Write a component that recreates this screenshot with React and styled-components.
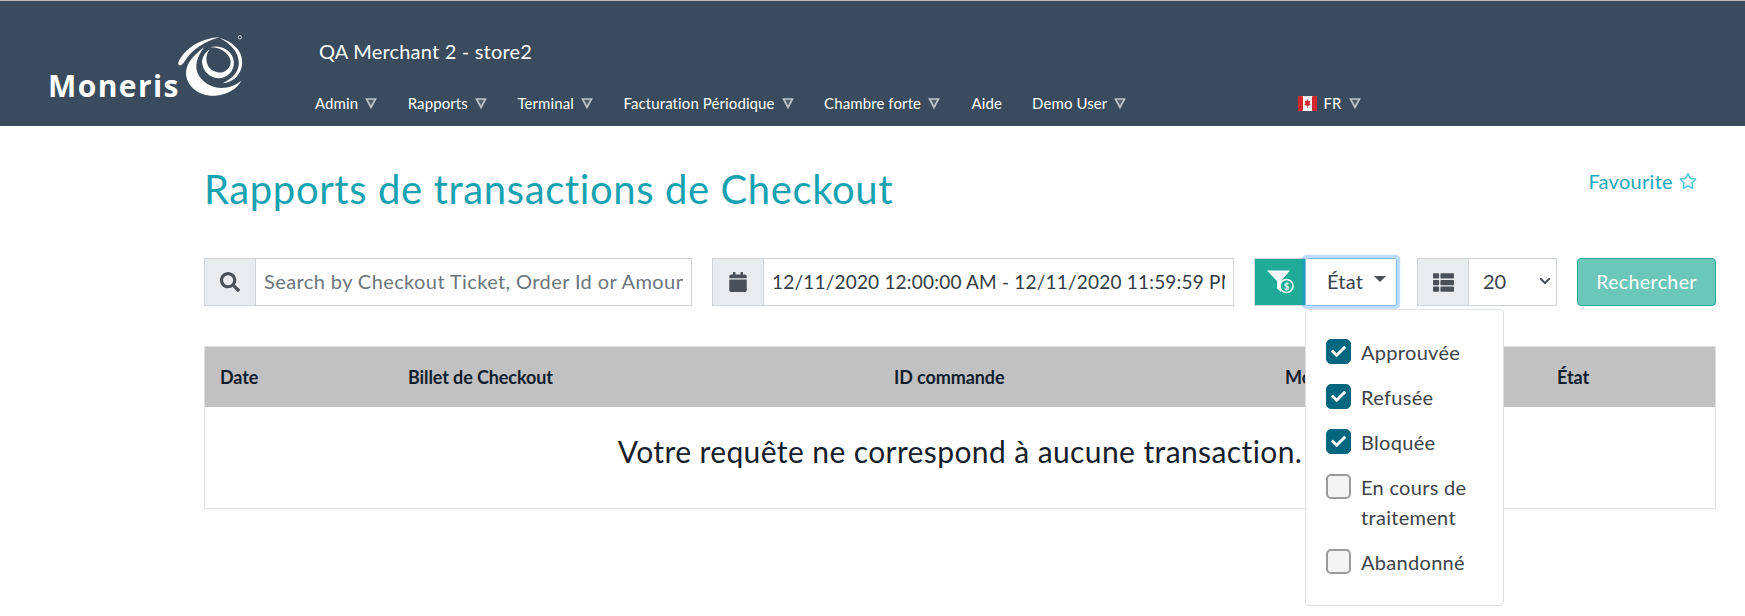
import React from "react";
import styled, { createGlobalStyle } from "styled-components";
import { FaSearch, FaCalendar, FaThList, FaRegStar, FaCheck, FaChevronDown } from "react-icons/fa";

const NAV_ITEMS = [
  { label: "Admin", arrow: true, gap: 30.5 },
  { label: "Rapports", arrow: true, gap: 30.5 },
  { label: "Terminal", arrow: true, gap: 30.5 },
  { label: "Facturation Périodique", arrow: true, gap: 30.5 },
  { label: "Chambre forte", arrow: true, gap: 31.5 },
  { label: "Aide", arrow: false, gap: 30 },
  { label: "Demo User", arrow: true, gap: 172 },
];

const STATUSES = [
  { label: "Approuvée", checked: true },
  { label: "Refusée", checked: true },
  { label: "Bloquée", checked: true },
  { label: "En cours de traitement", checked: false },
  { label: "Abandonné", checked: false },
];

const COLUMNS = [
  { label: "Date", width: 188 },
  { label: "Billet de Checkout", width: 486 },
  { label: "ID commande", width: 391 },
  { label: "Montant", width: 272 },
  { label: "État", width: 173 },
];

const Arrow = () => (
  <NavArrow viewBox="0 0 12 12">
    <path d="M1.5 2 H10.5 L6 10.5 Z" fill="rgba(255,255,255,0.12)" stroke="#bcc3ca" strokeWidth="1.7" />
  </NavArrow>
);

const Swirl = () => (
  <svg width="72" height="72" viewBox="40 0 215 216">
    <path
      d="M118 52 C85 75 60 105 64 135 C68 175 110 200 150 197 C185 195 215 178 230 152 C205 172 170 180 140 168 C108 155 88 125 96 95 C100 80 108 65 118 52 Z"
      fill="#fff"
    />
    <path
      d="M40 100 C52 65 100 24 165 22 C125 32 88 55 66 84 C60 95 50 108 44 106 C41 105 40 103 40 100 Z"
      fill="#fff"
    />
    <path
      d="M165 24 C205 35 235 65 232 100 C230 135 205 158 172 160 C205 145 222 125 222 98 C222 70 200 42 165 24 Z"
      fill="#fff"
    />
    <path
      d="M135 52 C165 42 204 60 207 95 C209 125 185 145 160 145 C135 143 115 125 112 100 C110 85 120 68 135 58 C124 72 121 90 130 108 C140 124 160 131 176 126 C190 120 200 105 197 90 C190 68 165 50 135 52 Z"
      fill="#fff"
    />
    <circle cx="225" cy="22" r="5" fill="none" stroke="#c6ccd2" strokeWidth="3" />
  </svg>
);

const CanadaFlag = () => (
  <svg width="19" height="15" viewBox="0 0 19 15">
    <rect width="19" height="15" rx="1.5" fill="#f4f4f4" />
    <rect width="5" height="15" rx="1" fill="#d3262c" />
    <rect x="14" width="5" height="15" rx="1" fill="#d3262c" />
    <path d="M9.5 3 L10.6 5.2 L12.2 4.6 L11.6 8 L13 8 L11 9.8 L9.8 9.6 V12 H9.2 V9.6 L8 9.8 L6 8 L7.4 8 L6.8 4.6 L8.4 5.2 Z" fill="#d3262c" />
  </svg>
);

const DollarFilter = () => (
  <svg width="27" height="24" viewBox="0 0 27 24">
    <path d="M0 0.5 H23 L14 11 V22 L10 18.5 V11 Z" fill="#fff" />
    <circle cx="19.5" cy="16" r="6.5" fill="#20ab98" stroke="#fff" strokeWidth="1.5" />
    <text x="19.5" y="19.5" textAnchor="middle" fontSize="9.5" fontWeight="700" fontFamily="Lato, sans-serif" fill="#fff">$</text>
  </svg>
);

function App() {
  return (
    <>
      <GlobalStyle />
      <Header>
        <LogoBox>
          <LogoWord>Moneris</LogoWord>
          <Swirl />
        </LogoBox>
        <HeaderRight>
          <StoreName>QA Merchant 2 - store2</StoreName>
          <Nav>
            {NAV_ITEMS.map((item) => (
              <NavItem key={item.label} $gap={item.gap}>
                {item.label}
                {item.arrow && <Arrow />}
              </NavItem>
            ))}
            <NavItem $gap={0}>
              <CanadaFlag />
              FR
              <Arrow />
            </NavItem>
          </Nav>
        </HeaderRight>
      </Header>

      <Main>
        <TitleRow>
          <Title>Rapports de transactions de Checkout</Title>
          <Favourite>
            Favourite <FaRegStar size={18} color="#4fc8dc" />
          </Favourite>
        </TitleRow>

        <Toolbar>
          <Group $width={488}>
            <Addon $width={51}>
              <FaSearch size={20} />
            </Addon>
            <Field placeholder="Search by Checkout Ticket, Order Id or Amount" readOnly />
          </Group>
          <Group $width={522}>
            <Addon $width={51}>
              <FaCalendar size={20} />
            </Addon>
            <Field $dark value="12/11/2020 12:00:00 AM - 12/11/2020 11:59:59 PM" readOnly />
          </Group>
          <StatusGroup>
            <FilterAddon>
              <DollarFilter />
            </FilterAddon>
            <StatusButton>
              État
              <Caret />
            </StatusButton>
            <Menu>
              {STATUSES.map((status) => (
                <MenuRow key={status.label}>
                  <CheckBox $checked={status.checked}>
                    {status.checked && <FaCheck size={15} color="#fff" />}
                  </CheckBox>
                  <MenuLabel>{status.label}</MenuLabel>
                </MenuRow>
              ))}
            </Menu>
          </StatusGroup>
          <Group $width={140}>
            <Addon $width={51}>
              <FaThList size={21} />
            </Addon>
            <PageSize>
              20
              <FaChevronDown size={12} color="#3f4650" />
            </PageSize>
          </Group>
          <SearchButton>Rechercher</SearchButton>
        </Toolbar>

        <Table>
          <HeadRow>
            {COLUMNS.map((col) => (
              <HeadCell key={col.label} $width={col.width}>
                {col.label}
              </HeadCell>
            ))}
          </HeadRow>
          <EmptyRow>Votre requête ne correspond à aucune transaction.</EmptyRow>
        </Table>
      </Main>
    </>
  );
}

const GlobalStyle = createGlobalStyle`
  html, body {
    margin: 0;
    padding: 0;
    background: #fff;
    font-family: Lato, "Open Sans", sans-serif;
    color: #16202c;
  }
  html, body, #root { min-height: 100vh; }
  * { box-sizing: border-box; }
`;

const Header = styled.header`
  height: 126px;
  background: #394b5d;
  border-top: 1px solid #bdbdbd;
  display: flex;
  padding-left: 48px;
`;

const LogoBox = styled.div`
  width: 267px;
  height: 100px;
  padding-top: 29px;
  display: flex;
  align-items: flex-start;
`;

const LogoWord = styled.span`
  font-family: "Open Sans", sans-serif;
  font-size: 30px;
  font-weight: 700;
  color: #fff;
  margin-top: 40px;
  letter-spacing: 1.4px;
  line-height: 32px;
  width: 130px;
`;

const HeaderRight = styled.div`
  display: flex;
  flex-direction: column;
`;

const StoreName = styled.div`
  color: #fff;
  font-size: 20px;
  line-height: 24px;
  margin: 38px 0 0 4px;
  letter-spacing: 0.2px;
`;

const Nav = styled.nav`
  display: flex;
  margin-top: 30px;
`;

const NavItem = styled.span`
  display: inline-flex;
  align-items: center;
  gap: 6px;
  color: #fff;
  font-size: 15px;
  line-height: 20px;
  letter-spacing: 0.1px;
  margin-right: ${(p) => p.$gap}px;
`;

const NavArrow = styled.svg`
  width: 12px;
  height: 12px;
  margin-left: 1px;
`;

const Main = styled.main`
  width: 1512px;
  margin-left: 204px;
`;

const TitleRow = styled.div`
  display: flex;
  justify-content: space-between;
  align-items: flex-start;
  height: 132px;
  padding-top: 40px;
`;

const Title = styled.h1`
  margin: 0;
  font-size: 40px;
  font-weight: 400;
  line-height: 46px;
  color: #17a2b1;
  letter-spacing: 0.6px;
`;

const Favourite = styled.a`
  display: inline-flex;
  align-items: center;
  gap: 6px;
  font-size: 20px;
  line-height: 24px;
  letter-spacing: 0.3px;
  color: #17a9bd;
  margin: 3px 19px 0 0;
`;

const Toolbar = styled.div`
  display: flex;
  gap: 20px;
  height: 48px;
`;

const Group = styled.div`
  display: flex;
  flex: none;
  width: ${(p) => p.$width}px;
  height: 48px;
  border: 1px solid #ced4da;
  background: #fff;
`;

const Addon = styled.div`
  flex: none;
  width: ${(p) => p.$width}px;
  display: flex;
  align-items: center;
  justify-content: center;
  background: #e9ecef;
  border-right: 1px solid #ced4da;
  color: #495057;
`;

const Field = styled.input`
  flex: 1;
  min-width: 0;
  border: 0;
  outline: 0;
  padding: 0 8px 2px;
  font: 400 19px Lato, sans-serif;
  letter-spacing: 0.2px;
  color: ${(p) => (p.$dark ? "#333b44" : "#6c757d")};

  &::placeholder {
    color: #6c757d;
    opacity: 1;
    font-size: 20px;
    letter-spacing: 0.4px;
  }
`;

const StatusGroup = styled.div`
  position: relative;
  display: flex;
  flex: none;
  width: 143px;
  height: 48px;
`;

const FilterAddon = styled.div`
  flex: none;
  width: 51px;
  display: flex;
  align-items: center;
  justify-content: center;
  background: #20ab98;
  border: 1px solid #ced4da;
  border-right: 0;
`;

const StatusButton = styled.div`
  flex: 1;
  display: flex;
  align-items: center;
  gap: 11px;
  padding: 0 0 2px 21px;
  background: #fff;
  border: 1px solid #80bdff;
  border-radius: 2px;
  box-shadow: 0 0 0 3.2px rgba(0, 123, 255, 0.25);
  font-size: 20px;
  letter-spacing: 0.2px;
  color: #39424c;
`;

const Caret = styled.span`
  width: 0;
  height: 0;
  margin-top: -4px;
  border-left: 6px solid transparent;
  border-right: 6px solid transparent;
  border-top: 6px solid #495057;
`;

const Menu = styled.div`
  position: absolute;
  z-index: 2;
  top: 51px;
  left: 51px;
  width: 199px;
  height: 297px;
  padding: 29px 20px 0;
  background: #fff;
  border: 1px solid #dfe1e4;
  border-radius: 4px;
  display: flex;
  flex-direction: column;
  gap: 16px;
`;

const MenuRow = styled.label`
  display: flex;
  align-items: flex-start;
  gap: 10px;
`;

const CheckBox = styled.span`
  flex: none;
  width: 25px;
  height: 25px;
  display: flex;
  align-items: center;
  justify-content: center;
  border-radius: 5px;
  background: ${(p) => (p.$checked ? "#00677f" : "#f4f4f4")};
  border: ${(p) => (p.$checked ? "1px solid #00677f" : "2px solid #9a9a9a")};
`;

const MenuLabel = styled.span`
  font-size: 20px;
  line-height: 30px;
  margin: -2px 0 1px;
  color: #3d4248;
  letter-spacing: 0.3px;
`;

const PageSize = styled.div`
  flex: 1;
  display: flex;
  align-items: center;
  justify-content: space-between;
  padding: 0 5px 2px 14px;
  font-size: 20px;
  color: #39424c;
`;

const SearchButton = styled.button`
  flex: none;
  width: 139px;
  height: 48px;
  padding-bottom: 3px;
  background: #6cc7bb;
  border: 1px solid #20ab98;
  border-radius: 4px;
  color: #fff;
  font: 400 19.5px Lato, sans-serif;
  letter-spacing: 0.4px;
`;

const Table = styled.div`
  margin-top: 40px;
  border: 1px solid #dee2e6;
`;

const HeadRow = styled.div`
  display: flex;
  height: 60px;
  background: #c1c1c1;
  align-items: center;
`;

const HeadCell = styled.div`
  flex: none;
  width: ${(p) => p.$width}px;
  padding-left: 15px;
  font-size: 18px;
  font-weight: 700;
  letter-spacing: -0.1px;
  color: #12202e;
`;

const EmptyRow = styled.div`
  height: 101px;
  padding-top: 24px;
  text-align: center;
  font-size: 30px;
  line-height: 40px;
  color: #16202c;
  letter-spacing: 0.4px;
`;

export default App;
